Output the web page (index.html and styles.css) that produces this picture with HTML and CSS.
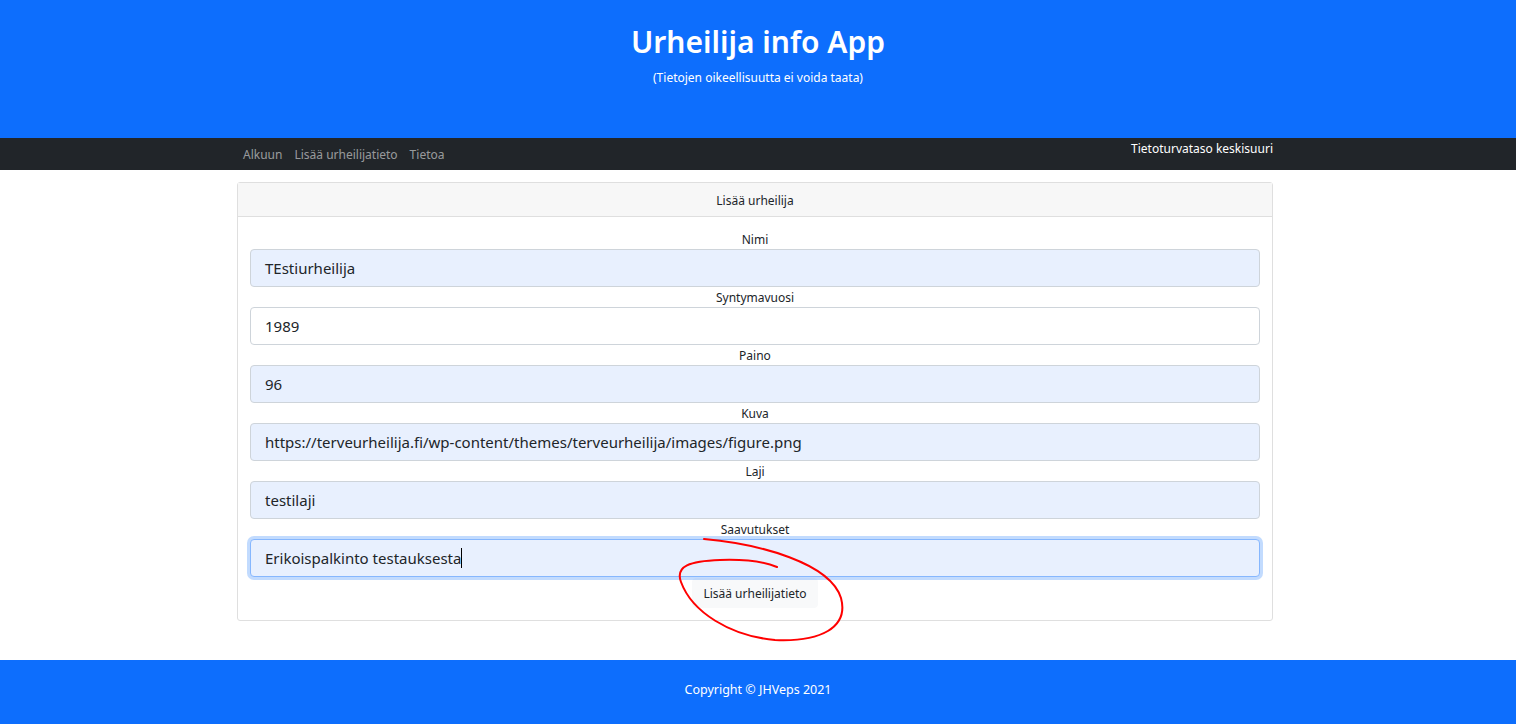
FILE: index.html
```html
<!DOCTYPE html>
<html lang="fi">
<head>
<meta charset="utf-8">
<title>Urheilija info App</title>
<link rel="stylesheet" href="styles.css">
</head>
<body>
<header class="hero">
  <h1 class="hero-title">Urheilija info App</h1>
  <p class="hero-sub">(Tietojen oikeellisuutta ei voida taata)</p>
</header>
<nav class="navbar">
  <div class="nav-inner">
    <div class="nav-links">
      <a class="nav-link" href="#">Alkuun</a>
      <a class="nav-link" href="#">Lisää urheilijatieto</a>
      <a class="nav-link" href="#">Tietoa</a>
    </div>
    <span class="nav-status">Tietoturvataso keskisuuri</span>
  </div>
</nav>
<main class="container">
  <section class="card">
    <div class="card-header">Lisää urheilija</div>
    <form class="card-body">
      <label class="field-label">Nimi</label>
      <div class="input autofill">TEstiurheilija</div>
      <label class="field-label">Syntymavuosi</label>
      <div class="input">1989</div>
      <label class="field-label">Paino</label>
      <div class="input autofill">96</div>
      <label class="field-label">Kuva</label>
      <div class="input autofill">https://terveurheilija.fi/wp-content/themes/terveurheilija/images/figure.png</div>
      <label class="field-label">Laji</label>
      <div class="input autofill">testilaji</div>
      <label class="field-label">Saavutukset</label>
      <div class="input autofill focused">Erikoispalkinto testauksesta<span class="caret"></span></div>
      <div class="actions">
        <button type="button" class="btn-light">Lisää urheilijatieto</button>
      </div>
    </form>
  </section>
</main>
<footer class="footer">Copyright © JHVeps 2021</footer>
<svg class="annotation" width="1516" height="724" viewBox="0 0 1516 724" xmlns="http://www.w3.org/2000/svg">
  <path d="M704,539 C760,544 830,563 841,598 C849,628 820,642 775,640 C730,636 692,612 681,582 C675,566 690,561 720,560 C750,559 765,562 777,567" fill="none" stroke="#ff0000" stroke-width="2" stroke-linecap="round"/>
</svg>
</body>
</html>
```
FILE: styles.css
```css
* { box-sizing: border-box; }
html, body { margin: 0; padding: 0; }
body {
  font-family: "Noto Sans", "Open Sans", sans-serif;
  color: #212529;
  background: #fff;
  width: 1516px;
  height: 724px;
  overflow: hidden;
  position: relative;
}
.hero {
  background: #0d6efd;
  color: #fff;
  height: 138px;
  text-align: center;
  padding-top: 22px;
}
.hero-title {
  margin: 0;
  font-size: 30px;
  font-weight: 600;
  line-height: 40px;
}
.hero-sub {
  margin: 7px 0 0;
  font-size: 12px;
  line-height: 18px;
}
.navbar {
  background: #212529;
  height: 32px;
}
.nav-inner {
  width: 1036px;
  margin-left: 237px;
  display: flex;
  justify-content: space-between;
  padding-left: 6px;
}
.nav-links {
  display: flex;
  gap: 12px;
  padding-top: 8px;
}
.nav-link {
  color: rgba(255,255,255,.55);
  text-decoration: none;
  font-size: 12px;
  line-height: 18px;
}
.nav-status {
  color: #fff;
  font-size: 12px;
  line-height: 18px;
  padding-top: 2px;
}
.container {
  width: 1036px;
  margin: 12px 0 0 237px;
}
.card {
  border: 1px solid #dfdfdf;
  border-radius: 3px;
  height: 439px;
}
.card-header {
  background: #f7f7f7;
  border-bottom: 1px solid #dfdfdf;
  height: 34px;
  line-height: 20px;
  padding-top: 8px;
  text-align: center;
  font-size: 12px;
}
.card-body {
  padding: 12px 12px 0;
  display: flex;
  flex-direction: column;
}
.field-label {
  text-align: center;
  font-size: 12px;
  line-height: 20px;
  height: 20px;
  padding-top: 1px;
}
.input {
  height: 38px;
  border: 1px solid #ced4da;
  border-radius: 4px;
  padding: 0 14px;
  font-size: 15px;
  line-height: 36px;
  background: #fff;
  white-space: nowrap;
  position: relative;
}
.input.autofill { background: #e8f0fe; }
.input.focused {
  border-color: #86b7fe;
  box-shadow: 0 0 0 3px rgba(13,110,253,.25);
}
.caret {
  display: inline-block;
  width: 1px;
  height: 20px;
  background: #000;
  vertical-align: middle;
  margin-top: -3px;
}
.actions {
  display: flex;
  justify-content: center;
  padding-top: 1px;
}
.btn-light {
  font-family: inherit;
  font-size: 12px;
  background: #f8f9fa;
  border: 1px solid #f8f9fa;
  color: #212529;
  border-radius: 4px;
  height: 30px;
  padding: 0 10px;
}
.footer {
  position: absolute;
  left: 0;
  right: 0;
  bottom: 0;
  height: 64px;
  background: #0d6efd;
  color: #fff;
  font-size: 12.5px;
  line-height: 60px;
  text-align: center;
}
.annotation {
  position: absolute;
  left: 0;
  top: 0;
  pointer-events: none;
}
```
